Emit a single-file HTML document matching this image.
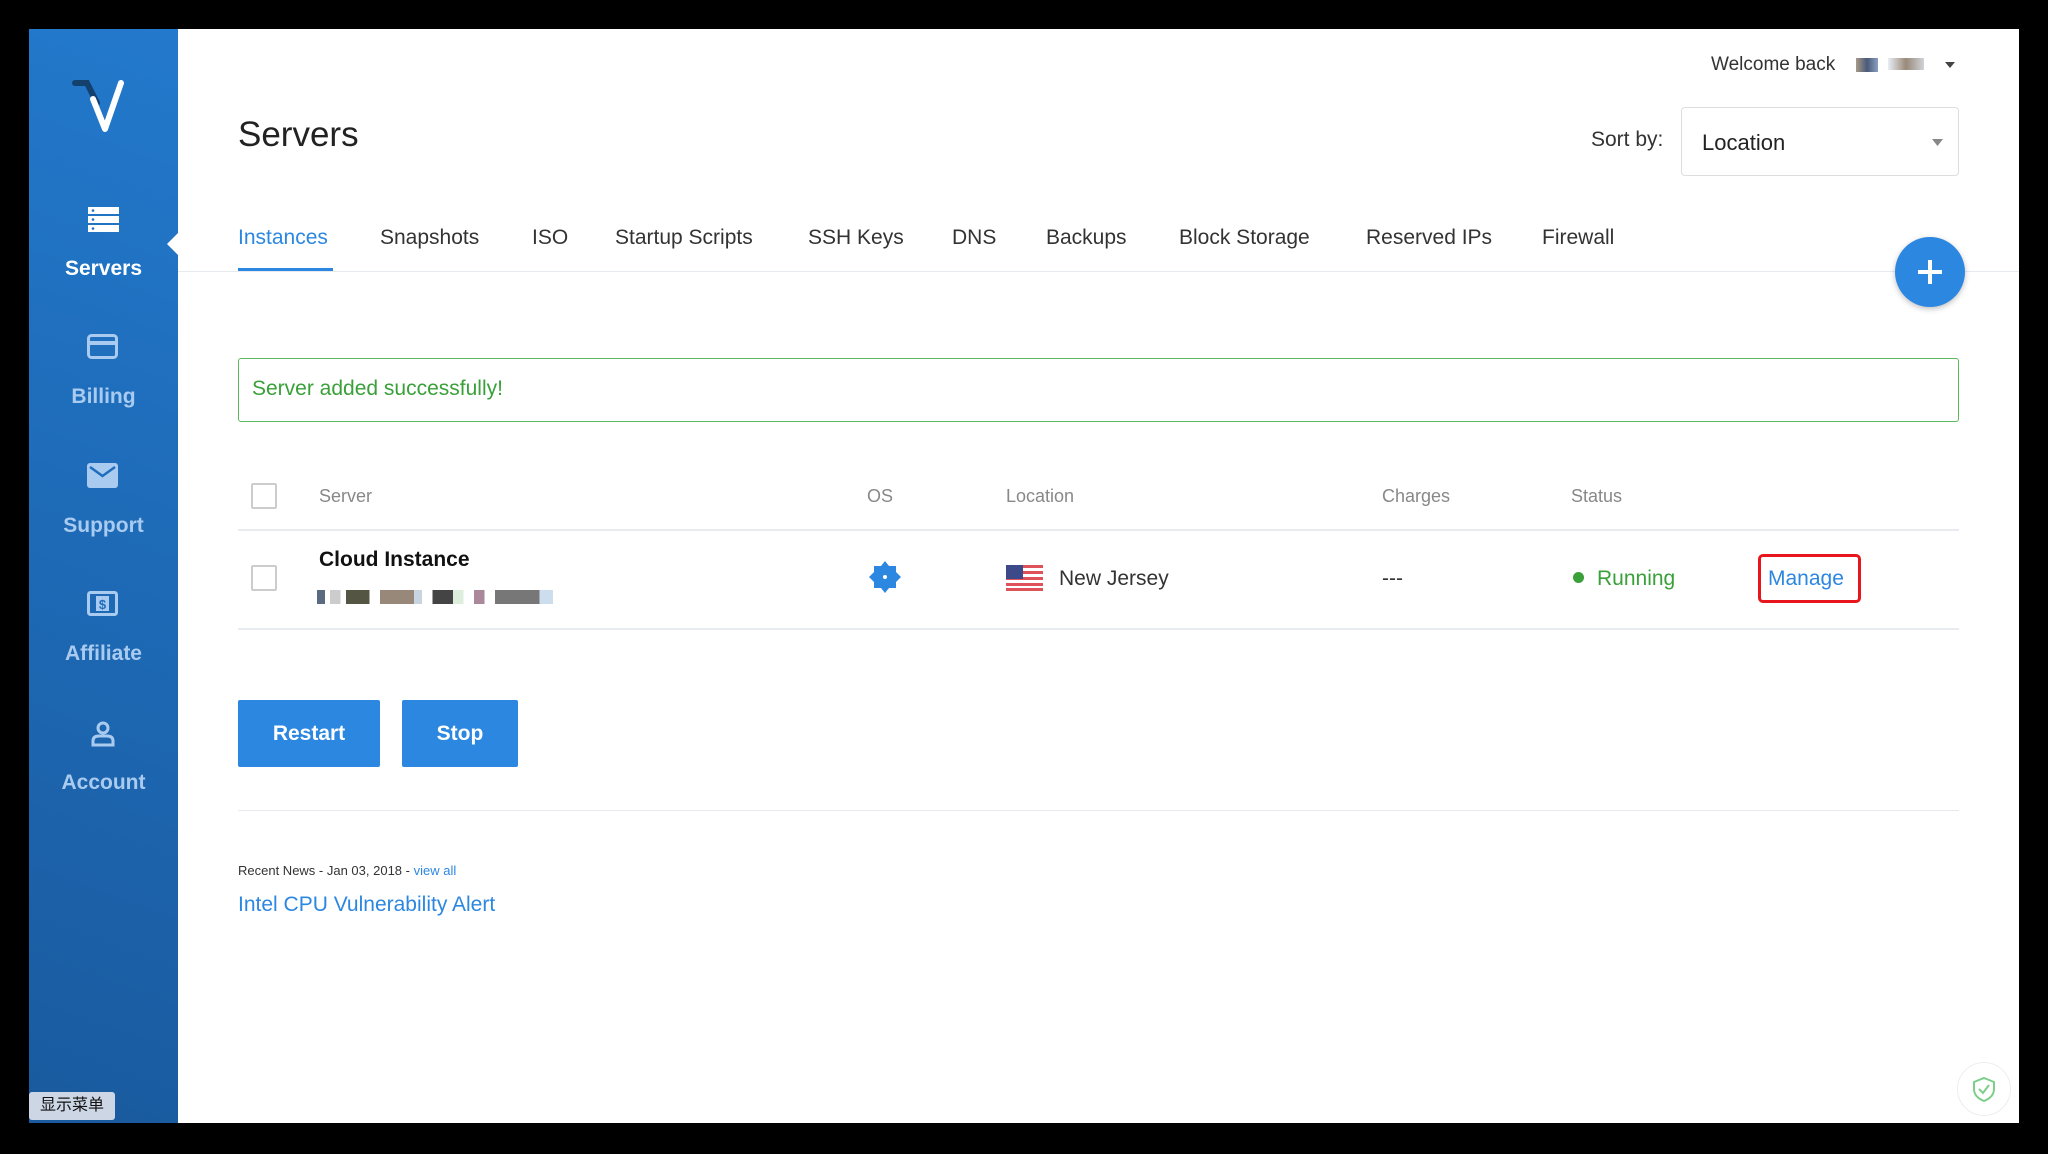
<!DOCTYPE html>
<html><head><meta charset="utf-8"><style>
*{margin:0;padding:0;box-sizing:border-box}
body{width:2048px;height:1154px;background:#000;position:relative;overflow:hidden;font-family:"Liberation Sans","Noto Sans CJK SC",sans-serif}
.a{position:absolute;white-space:nowrap}
#side{position:absolute;left:29px;top:29px;width:149px;height:1094px;background:linear-gradient(200deg,#2379cc 0%,#1e6bb8 45%,#1a5a9e 100%)}
#main{position:absolute;left:178px;top:29px;width:1841px;height:1094px;background:#fff}
.nav{position:absolute;left:0;width:149px;text-align:center;font-weight:bold;font-size:21px;color:#a9cbef}
.tab{position:absolute;top:226px;font-size:21px;color:#333}
.th{position:absolute;top:486px;font-size:18px;color:#888}
.cb{position:absolute;width:26px;height:26px;border:2px solid #ccc;border-radius:2px;left:251px}
.btn{position:absolute;top:700px;height:67px;background:#2c87e0;color:#fff;font-weight:bold;font-size:21px;text-align:center;line-height:67px;border-radius:2px}
</style></head><body>
<div id="side">
 <svg class="a" style="left:40px;top:48px" width="70" height="60" viewBox="0 0 70 60"><path d="M6 6 L18 6 L28 26" stroke="#14406e" stroke-width="6" fill="none" stroke-linecap="round"/><path d="M24 22 L36 52 L52 6" stroke="#fff" stroke-width="6" fill="none" stroke-linecap="round" stroke-linejoin="round"/></svg>
 <svg class="a" style="left:59px;top:178px" width="31" height="25"><rect x="0" y="0" width="31" height="7" fill="#fff"/><rect x="0" y="9" width="31" height="7" fill="#fff"/><rect x="0" y="18" width="31" height="7" fill="#fff"/><circle cx="5" cy="3.5" r="1.3" fill="#1f6dbd"/><circle cx="5" cy="12.5" r="1.3" fill="#1f6dbd"/><circle cx="5" cy="21.5" r="1.3" fill="#1f6dbd"/></svg>
 <div class="nav" style="top:228px;color:#fff">Servers</div>
 <svg class="a" style="left:138px;top:203px" width="12" height="24"><path d="M12 0 L0 12 L12 24Z" fill="#fff"/></svg>
 <svg class="a" style="left:58px;top:305px" width="31" height="25"><rect x="1.5" y="1.5" width="28" height="22" rx="3" fill="none" stroke="#a9cbef" stroke-width="3"/><rect x="1.5" y="7" width="28" height="4" fill="#a9cbef"/></svg>
 <div class="nav" style="top:356px">Billing</div>
 <svg class="a" style="left:58px;top:434px" width="31" height="25"><rect x="0" y="0" width="31" height="25" rx="3" fill="#a9cbef"/><path d="M3 4 L15.5 13 L28 4" stroke="#1f6dbd" stroke-width="2.5" fill="none"/></svg>
 <div class="nav" style="top:485px">Support</div>
 <svg class="a" style="left:58px;top:562px" width="31" height="25"><rect x="1.5" y="1.5" width="28" height="22" rx="2" fill="none" stroke="#a9cbef" stroke-width="3"/><rect x="9" y="5" width="13" height="15" fill="#a9cbef"/><text x="15.5" y="18" font-size="13" font-weight="bold" fill="#1f6dbd" text-anchor="middle" font-family="Liberation Sans">$</text></svg>
 <div class="nav" style="top:613px">Affiliate</div>
 <svg class="a" style="left:62px;top:692px" width="24" height="26"><circle cx="12" cy="7" r="5" fill="none" stroke="#a9cbef" stroke-width="3"/><path d="M2 24 L2 20 Q2 15 8 15 L16 15 Q22 15 22 20 L22 24Z" fill="none" stroke="#a9cbef" stroke-width="3"/></svg>
 <div class="nav" style="top:742px">Account</div>
</div>
<div class="a" style="left:29px;top:1092px;width:86px;height:28px;background:#ccd6e4;border-radius:3px;font-size:16px;color:#111;line-height:28px;text-align:center">显示菜单</div>
<div id="main"></div>
<div class="a" style="left:238px;top:115px;font-size:35px;color:#222">Servers</div>
<div class="a" style="left:1711px;top:54px;font-size:19px;color:#333">Welcome back</div>
<div class="a" style="left:1856px;top:58px;width:22px;height:14px;background:linear-gradient(90deg,#a89a88,#4a5a78,#8aa0c0)"></div>
<div class="a" style="left:1888px;top:58px;width:36px;height:12px;background:linear-gradient(90deg,#e8eef4,#9a8a7a,#cfd3d8)"></div>
<svg class="a" style="left:1945px;top:62px" width="10" height="6"><path d="M0 0H10L5 6Z" fill="#444"/></svg>
<div class="a" style="left:1591px;top:128px;font-size:21px;color:#333">Sort by:</div>
<div class="a" style="left:1681px;top:107px;width:278px;height:69px;border:1.5px solid #ddd;border-radius:4px"></div>
<div class="a" style="left:1702px;top:130px;font-size:22px;color:#222">Location</div>
<svg class="a" style="left:1932px;top:139px" width="11" height="7"><path d="M0 0H11L5.5 7Z" fill="#888"/></svg>
<div class="tab" style="left:238px;color:#2c87e0">Instances</div>
<div class="a" style="left:238px;top:268px;width:95px;height:3px;background:#2c87e0"></div>
<div class="tab" style="left:380px">Snapshots</div>
<div class="tab" style="left:532px">ISO</div>
<div class="tab" style="left:615px">Startup Scripts</div>
<div class="tab" style="left:808px">SSH Keys</div>
<div class="tab" style="left:952px">DNS</div>
<div class="tab" style="left:1046px">Backups</div>
<div class="tab" style="left:1179px">Block Storage</div>
<div class="tab" style="left:1366px">Reserved IPs</div>
<div class="tab" style="left:1542px">Firewall</div>
<div class="a" style="left:178px;top:271px;width:1841px;height:1px;background:#e6e9ee"></div>
<div class="a" style="left:1895px;top:237px;width:70px;height:70px;border-radius:50%;background:#2c87e0;box-shadow:0 2px 6px rgba(0,0,0,.25)"></div>
<div class="a" style="left:1918px;top:270px;width:24px;height:4px;background:#fff"></div>
<div class="a" style="left:1928px;top:260px;width:4px;height:24px;background:#fff"></div>
<div class="a" style="left:238px;top:358px;width:1721px;height:64px;border:1.5px solid #5cb85c;border-radius:3px"></div>
<div class="a" style="left:252px;top:377px;font-size:21px;color:#3aa03a">Server added successfully!</div>
<div class="cb" style="top:483px"></div>
<div class="th" style="left:319px">Server</div>
<div class="th" style="left:867px">OS</div>
<div class="th" style="left:1006px">Location</div>
<div class="th" style="left:1382px">Charges</div>
<div class="th" style="left:1571px">Status</div>
<div class="a" style="left:238px;top:529px;width:1721px;height:1.5px;background:#e8ebef"></div>
<div class="cb" style="top:565px"></div>
<div class="a" style="left:319px;top:548px;font-size:21px;font-weight:bold;color:#111">Cloud Instance</div>
<div class="a" style="left:317px;top:590px;width:262px;height:14px;background:linear-gradient(90deg,#5a6a80 0 3%,#fff 3% 5%,#ccc 5% 9%,#fff 9% 11%,#554 11% 20%,#fff 20% 24%,#98887a 24% 37%,#c8d4e0 37% 40%,#fff 40% 44%,#444 44% 52%,#ded 52% 56%,#fff 56% 60%,#a89 60% 64%,#fff 64% 68%,#777 68% 85%,#cde 85% 90%,#fff 90%)"></div>
<svg class="a" style="left:869px;top:561px" width="32" height="32" viewBox="0 0 32 32"><path d="M16 0 L20 5 L27 5 L27 11 L32 16 L27 21 L27 27 L20 27 L16 32 L12 27 L5 27 L5 21 L0 16 L5 11 L5 5 L12 5Z" fill="#2c87e0"/><circle cx="16" cy="16" r="2" fill="#fff"/></svg>
<svg class="a" style="left:1006px;top:565px" width="37" height="26"><rect width="37" height="26" rx="3" fill="#fff"/><g fill="#e0525a"><rect y="0" width="37" height="3"/><rect y="6" width="37" height="3"/><rect y="12" width="37" height="3"/><rect y="18" width="37" height="3"/><rect y="23" width="37" height="3"/></g><rect width="17" height="14" fill="#3c4a8a"/></svg>
<div class="a" style="left:1059px;top:567px;font-size:21px;color:#333">New Jersey</div>
<div class="a" style="left:1382px;top:567px;font-size:21px;color:#333">---</div>
<div class="a" style="left:1573px;top:572px;width:11px;height:11px;border-radius:50%;background:#3aa03a"></div>
<div class="a" style="left:1597px;top:567px;font-size:21px;color:#3aa03a">Running</div>
<div class="a" style="left:1758px;top:554px;width:103px;height:49px;border:3px solid #e8161c;border-radius:5px"></div>
<div class="a" style="left:1768px;top:567px;font-size:21px;color:#2c87e0">Manage</div>
<div class="a" style="left:238px;top:628px;width:1721px;height:1.5px;background:#e8ebef"></div>
<div class="btn" style="left:238px;width:142px">Restart</div>
<div class="btn" style="left:402px;width:116px">Stop</div>
<div class="a" style="left:238px;top:810px;width:1721px;height:1px;background:#e6e9ee"></div>
<div class="a" style="left:238px;top:863px;font-size:13px;color:#333">Recent News - Jan 03, 2018 - <span style="color:#2c87e0">view all</span></div>
<div class="a" style="left:238px;top:893px;font-size:21px;color:#2c87e0">Intel CPU Vulnerability Alert</div>
<div class="a" style="left:1957px;top:1062px;width:54px;height:54px;border-radius:50%;border:1px solid #eee;background:#fff"></div>
<svg class="a" style="left:1971px;top:1076px" width="26" height="26" viewBox="0 0 26 26"><path d="M13 2 L23 6 L23 13 Q23 21 13 25 Q3 21 3 13 L3 6Z" fill="none" stroke="#7ccf8a" stroke-width="2"/><path d="M8 13 L12 17 L18 9" fill="none" stroke="#7ccf8a" stroke-width="2"/></svg>
</body></html>
